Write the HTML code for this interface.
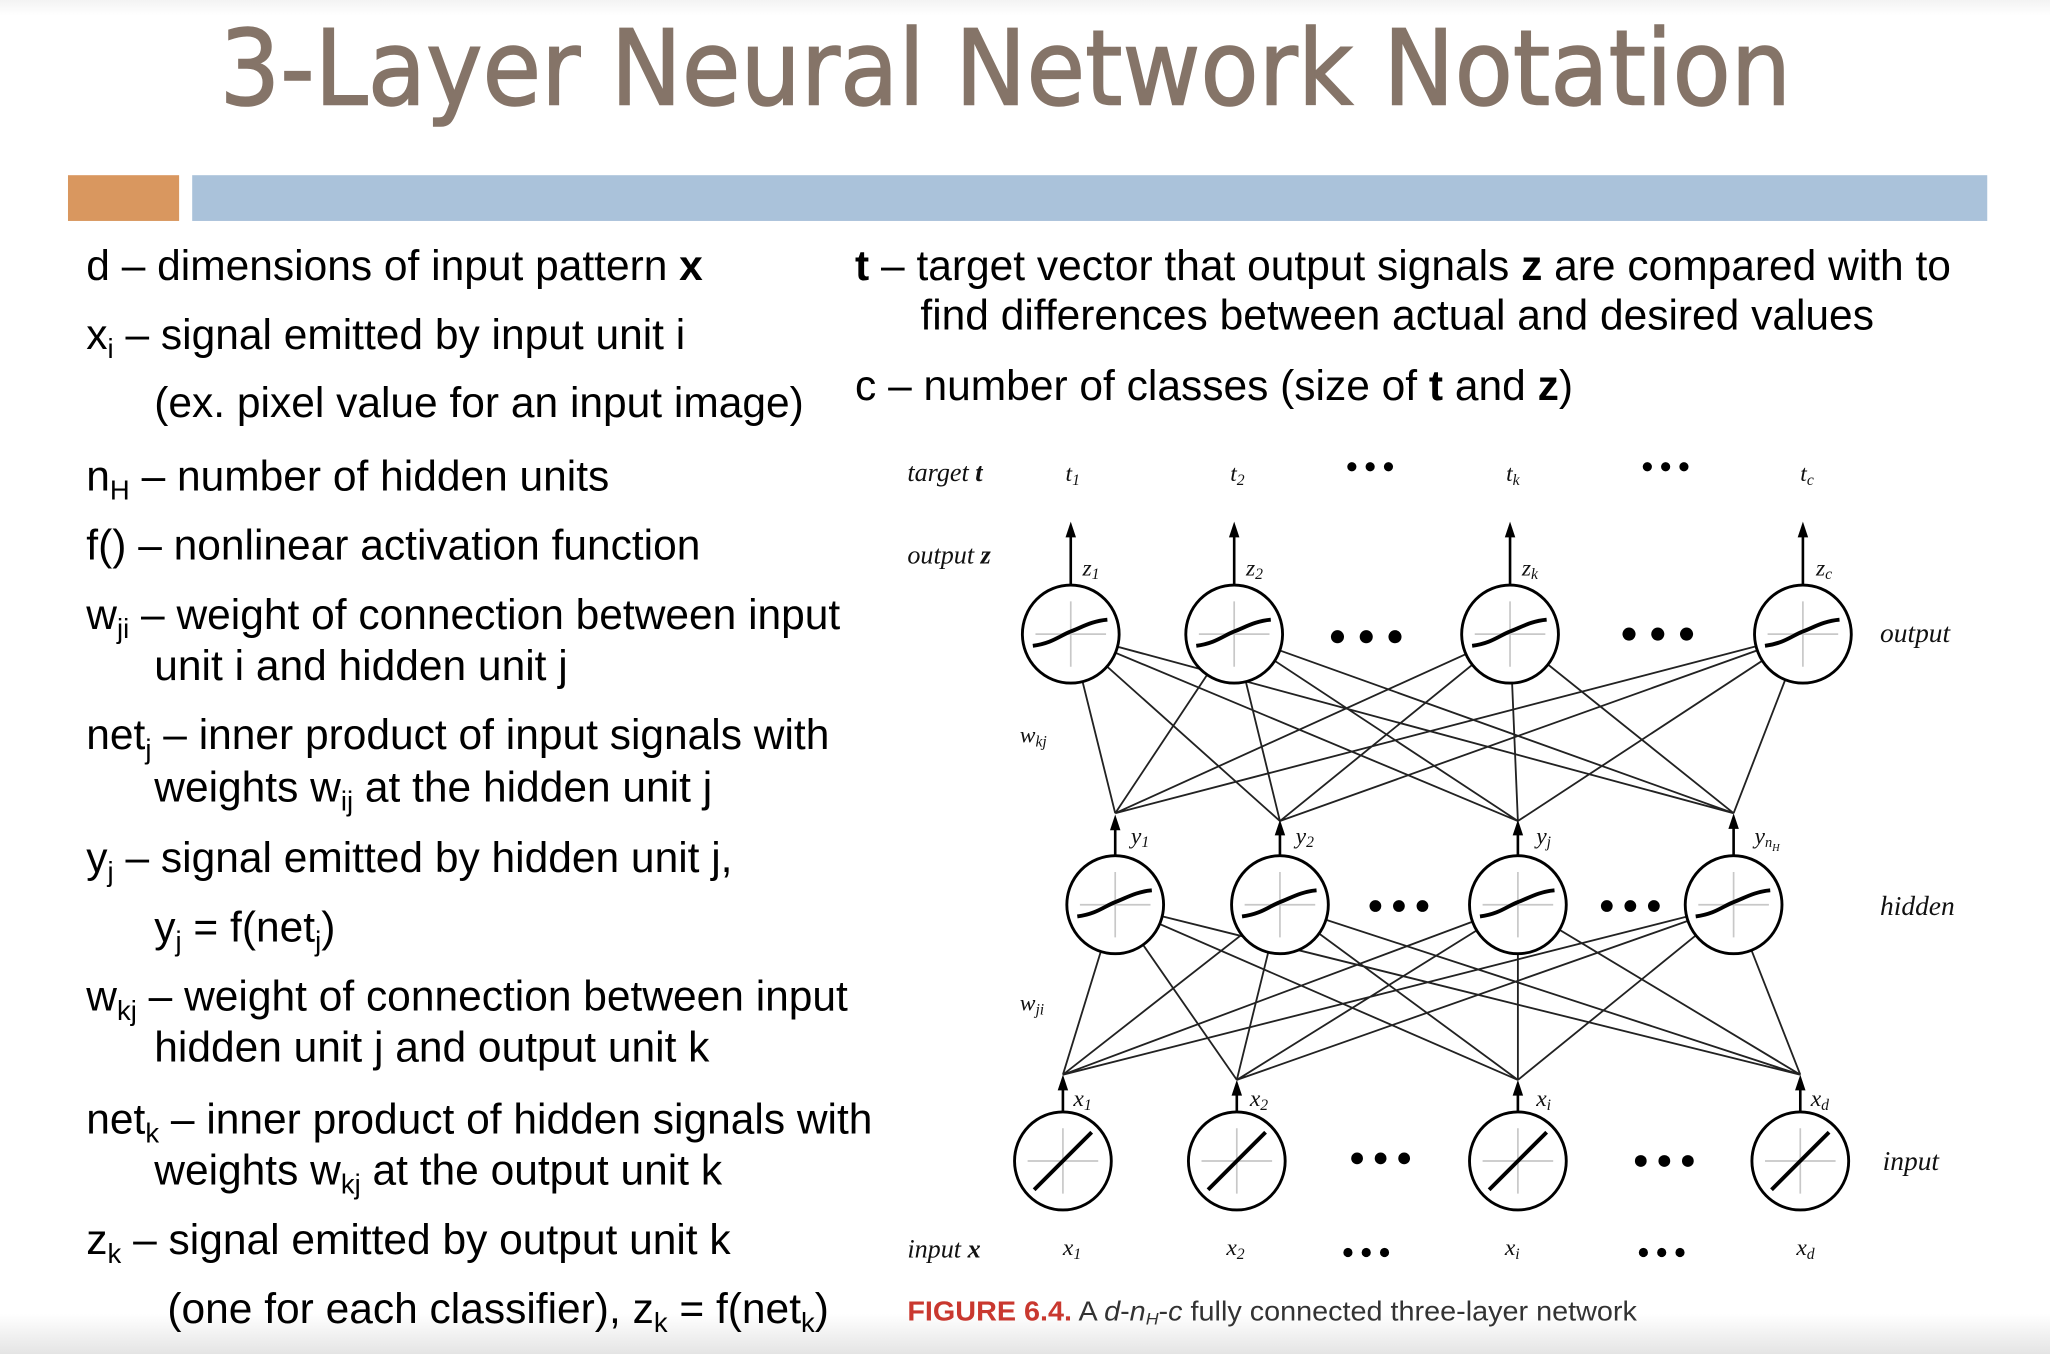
<!DOCTYPE html>
<html><head><meta charset="utf-8">
<style>
html,body{margin:0;padding:0;background:#fff;}
body{width:2050px;height:1354px;overflow:hidden;position:relative;}
#w{position:absolute;left:0;top:0;width:1568px;height:1036px;transform:scale(1.30740);transform-origin:0 0;
background:linear-gradient(#f3f3f3 0px,#fff 12px,#fff 1005px,#e4e4e4 1036px);}
.t{position:absolute;font-family:"Liberation Sans",Arial,sans-serif;font-size:32.5px;line-height:34px;color:#000;white-space:nowrap;}
.t sub{font-size:21px;vertical-align:-7px;line-height:0;}
b{font-weight:bold;}
svg{position:absolute;left:0;top:0;}
</style></head><body><div id="w">
<svg width="1568" height="1036" viewBox="0 0 1568 1036">
<text x="168" y="80" font-family="DejaVu Sans,sans-serif" font-size="80" fill="#857468" stroke="#857468" stroke-width="1.2" textLength="1202" lengthAdjust="spacingAndGlyphs">3-Layer Neural Network Notation</text>
<rect x="52" y="134" width="85" height="35" fill="#D9975F"/>
<rect x="147" y="134" width="1373" height="35" fill="#AAC2DA"/>
</svg>

<div class="t" style="left:66px;top:186px">d – dimensions of input pattern <b>x</b></div>
<div class="t" style="left:66px;top:239px">x<sub>i</sub> – signal emitted by input unit i</div>
<div class="t" style="left:118px;top:291px">(ex. pixel value for an input image)</div>
<div class="t" style="left:66px;top:347px">n<sub>H</sub> – number of hidden units</div>
<div class="t" style="left:66px;top:400px">f() – nonlinear activation function</div>
<div class="t" style="left:66px;top:453px">w<sub>ji</sub> – weight of connection between input</div>
<div class="t" style="left:118px;top:492px">unit i and hidden unit j</div>
<div class="t" style="left:66px;top:545px">net<sub>j</sub> – inner product of input signals with</div>
<div class="t" style="left:118px;top:585px">weights w<sub>ij</sub> at the hidden unit j</div>
<div class="t" style="left:66px;top:639px">y<sub>j</sub> – signal emitted by hidden unit j,</div>
<div class="t" style="left:118px;top:692px">y<sub>j</sub> = f(net<sub>j</sub>)</div>
<div class="t" style="left:66px;top:745px">w<sub>kj</sub> – weight of connection between input</div>
<div class="t" style="left:118px;top:784px">hidden unit j and output unit k</div>
<div class="t" style="left:66px;top:839px">net<sub>k</sub> – inner product of hidden signals with</div>
<div class="t" style="left:118px;top:878px">weights w<sub>kj</sub> at the output unit k</div>
<div class="t" style="left:66px;top:931px">z<sub>k</sub> – signal emitted by output unit k</div>
<div class="t" style="left:128px;top:984px">(one for each classifier), z<sub>k</sub> = f(net<sub>k</sub>)</div>

<div class="t" style="left:654px;top:186px"><b>t</b> – target vector that output signals <b>z</b> are compared with to</div>
<div class="t" style="left:704px;top:224px">find differences between actual and desired values</div>
<div class="t" style="left:654px;top:278px">c – number of classes (size of <b>t</b> and <b>z</b>)</div>

<svg width="1568" height="1036" viewBox="0 0 1568 1036">
<defs>
<g id="sg"><ellipse cx="0" cy="0" rx="37" ry="37.5" fill="#fff" stroke="#000" stroke-width="2.2"/>
<path d="M-27,0H27M0,-25V25" stroke="#c8c8c8" stroke-width="1.3"/>
<path d="M-29,9 C-14,7 -8,1 0,-2 S16,-10 28,-11" fill="none" stroke="#000" stroke-width="3"/></g>
<g id="ln"><ellipse cx="0" cy="0" rx="37" ry="37.5" fill="#fff" stroke="#000" stroke-width="2.2"/>
<path d="M-27,0H27M0,-25V25" stroke="#c8c8c8" stroke-width="1.3"/>
<path d="M-22,22 L22,-22" stroke="#000" stroke-width="3"/></g>
<path id="ah" d="M-4,12 L0,0 L4,12Z" fill="#000"/>
</defs>
<g stroke="#222" stroke-width="1.4">
<path d="M853,622L819,485M853,622L944,485M853,622L1155,485M853,622L1379,485
M979,628L819,485M979,628L944,485M979,628L1155,485M979,628L1379,485
M1161,628L819,485M1161,628L944,485M1161,628L1155,485M1161,628L1379,485
M1326,622L819,485M1326,622L944,485M1326,622L1155,485M1326,622L1379,485
M813,822L853,692M813,822L979,692M813,822L1161,692M813,822L1326,692
M946,826L853,692M946,826L979,692M946,826L1161,692M946,826L1326,692
M1161,826L853,692M1161,826L979,692M1161,826L1161,692M1161,826L1326,692
M1377,822L853,692M1377,822L979,692M1377,822L1161,692M1377,822L1326,692"/>
</g>
<g stroke="#000" stroke-width="2">
<path d="M819,448V406M944,448V406M1155,448V406M1379,448V406"/>
<path d="M853,655V630M979,655V634M1161,655V634M1326,655V629"/>
<path d="M813,851V829M946,851V833M1161,851V833M1377,851V829"/>
</g>
<use href="#ah" x="819" y="399"/><use href="#ah" x="944" y="399"/><use href="#ah" x="1155" y="399"/><use href="#ah" x="1379" y="399"/>
<use href="#ah" x="853" y="623"/><use href="#ah" x="979" y="627"/><use href="#ah" x="1161" y="627"/><use href="#ah" x="1326" y="622"/>
<use href="#ah" x="813" y="822"/><use href="#ah" x="946" y="826"/><use href="#ah" x="1161" y="826"/><use href="#ah" x="1377" y="822"/>
<use href="#sg" x="819" y="485"/><use href="#sg" x="944" y="485"/><use href="#sg" x="1155" y="485"/><use href="#sg" x="1379" y="485"/>
<use href="#sg" x="853" y="692"/><use href="#sg" x="979" y="692"/><use href="#sg" x="1161" y="692"/><use href="#sg" x="1326" y="692"/>
<use href="#ln" x="813" y="888"/><use href="#ln" x="946" y="888"/><use href="#ln" x="1161" y="888"/><use href="#ln" x="1377" y="888"/>
<g fill="#000">
<circle cx="1023" cy="487" r="5"/><circle cx="1045" cy="487" r="5"/><circle cx="1067" cy="487" r="5"/>
<circle cx="1246" cy="485" r="5"/><circle cx="1268" cy="485" r="5"/><circle cx="1290" cy="485" r="5"/>
<circle cx="1052" cy="693" r="4.5"/><circle cx="1070" cy="693" r="4.5"/><circle cx="1088" cy="693" r="4.5"/>
<circle cx="1229" cy="693" r="4.5"/><circle cx="1247" cy="693" r="4.5"/><circle cx="1265" cy="693" r="4.5"/>
<circle cx="1038" cy="886" r="4.5"/><circle cx="1056" cy="886" r="4.5"/><circle cx="1074" cy="886" r="4.5"/>
<circle cx="1255" cy="888" r="4.5"/><circle cx="1273" cy="888" r="4.5"/><circle cx="1291" cy="888" r="4.5"/>
<circle cx="1034" cy="357" r="3.5"/><circle cx="1048" cy="357" r="3.5"/><circle cx="1062" cy="357" r="3.5"/>
<circle cx="1260" cy="357" r="3.5"/><circle cx="1274" cy="357" r="3.5"/><circle cx="1288" cy="357" r="3.5"/>
<circle cx="1031" cy="958" r="3.5"/><circle cx="1045" cy="958" r="3.5"/><circle cx="1059" cy="958" r="3.5"/>
<circle cx="1257" cy="958" r="3.5"/><circle cx="1271" cy="958" r="3.5"/><circle cx="1285" cy="958" r="3.5"/>
</g>
<g font-family="Liberation Serif,serif" font-style="italic" font-size="20" fill="#111">
<text x="694" y="368">target <tspan font-weight="bold">t</tspan></text>
<text x="694" y="431">output <tspan font-weight="bold">z</tspan></text>
<text x="694" y="962">input <tspan font-weight="bold">x</tspan></text>
<text x="1438" y="491" font-size="21">output</text>
<text x="1438" y="700" font-size="21">hidden</text>
<text x="1440" y="895" font-size="21">input</text>
<text x="815" y="368" font-size="18">t<tspan font-size="12" dy="3">1</tspan></text>
<text x="941" y="368" font-size="18">t<tspan font-size="12" dy="3">2</tspan></text>
<text x="1152" y="368" font-size="18">t<tspan font-size="12" dy="3">k</tspan></text>
<text x="1377" y="368" font-size="18">t<tspan font-size="12" dy="3">c</tspan></text>
<text x="828" y="440" font-size="18">z<tspan font-size="12" dy="3">1</tspan></text>
<text x="953" y="440" font-size="18">z<tspan font-size="12" dy="3">2</tspan></text>
<text x="1164" y="440" font-size="18">z<tspan font-size="12" dy="3">k</tspan></text>
<text x="1389" y="440" font-size="18">z<tspan font-size="12" dy="3">c</tspan></text>
<text x="780" y="568" font-size="18">w<tspan font-size="12" dy="3">kj</tspan></text>
<text x="780" y="773" font-size="18">w<tspan font-size="12" dy="3">ji</tspan></text>
<text x="865" y="645" font-size="18">y<tspan font-size="12" dy="3">1</tspan></text>
<text x="991" y="645" font-size="18">y<tspan font-size="12" dy="3">2</tspan></text>
<text x="1175" y="645" font-size="18">y<tspan font-size="12" dy="3">j</tspan></text>
<text x="1342" y="645" font-size="18">y<tspan font-size="11" dy="3">n</tspan><tspan font-size="8" dy="3">H</tspan></text>
<text x="821" y="846" font-size="18">x<tspan font-size="12" dy="3">1</tspan></text>
<text x="956" y="846" font-size="18">x<tspan font-size="12" dy="3">2</tspan></text>
<text x="1175" y="846" font-size="18">x<tspan font-size="12" dy="3">i</tspan></text>
<text x="1385" y="846" font-size="18">x<tspan font-size="12" dy="3">d</tspan></text>
<text x="813" y="960" font-size="18">x<tspan font-size="12" dy="3">1</tspan></text>
<text x="938" y="960" font-size="18">x<tspan font-size="12" dy="3">2</tspan></text>
<text x="1151" y="960" font-size="18">x<tspan font-size="12" dy="3">i</tspan></text>
<text x="1374" y="960" font-size="18">x<tspan font-size="12" dy="3">d</tspan></text>
</g>
<text x="694" y="1010" font-family="Liberation Sans,sans-serif" font-size="21" fill="#333" textLength="558" lengthAdjust="spacingAndGlyphs"><tspan fill="#c9382f" font-weight="bold">FIGURE 6.4.</tspan> A <tspan font-style="italic">d</tspan>-<tspan font-style="italic">n<tspan font-size="13" dy="3">H</tspan></tspan><tspan dy="-3">-</tspan><tspan font-style="italic">c</tspan> fully connected three-layer network</text>
</svg>
</div></body></html>
